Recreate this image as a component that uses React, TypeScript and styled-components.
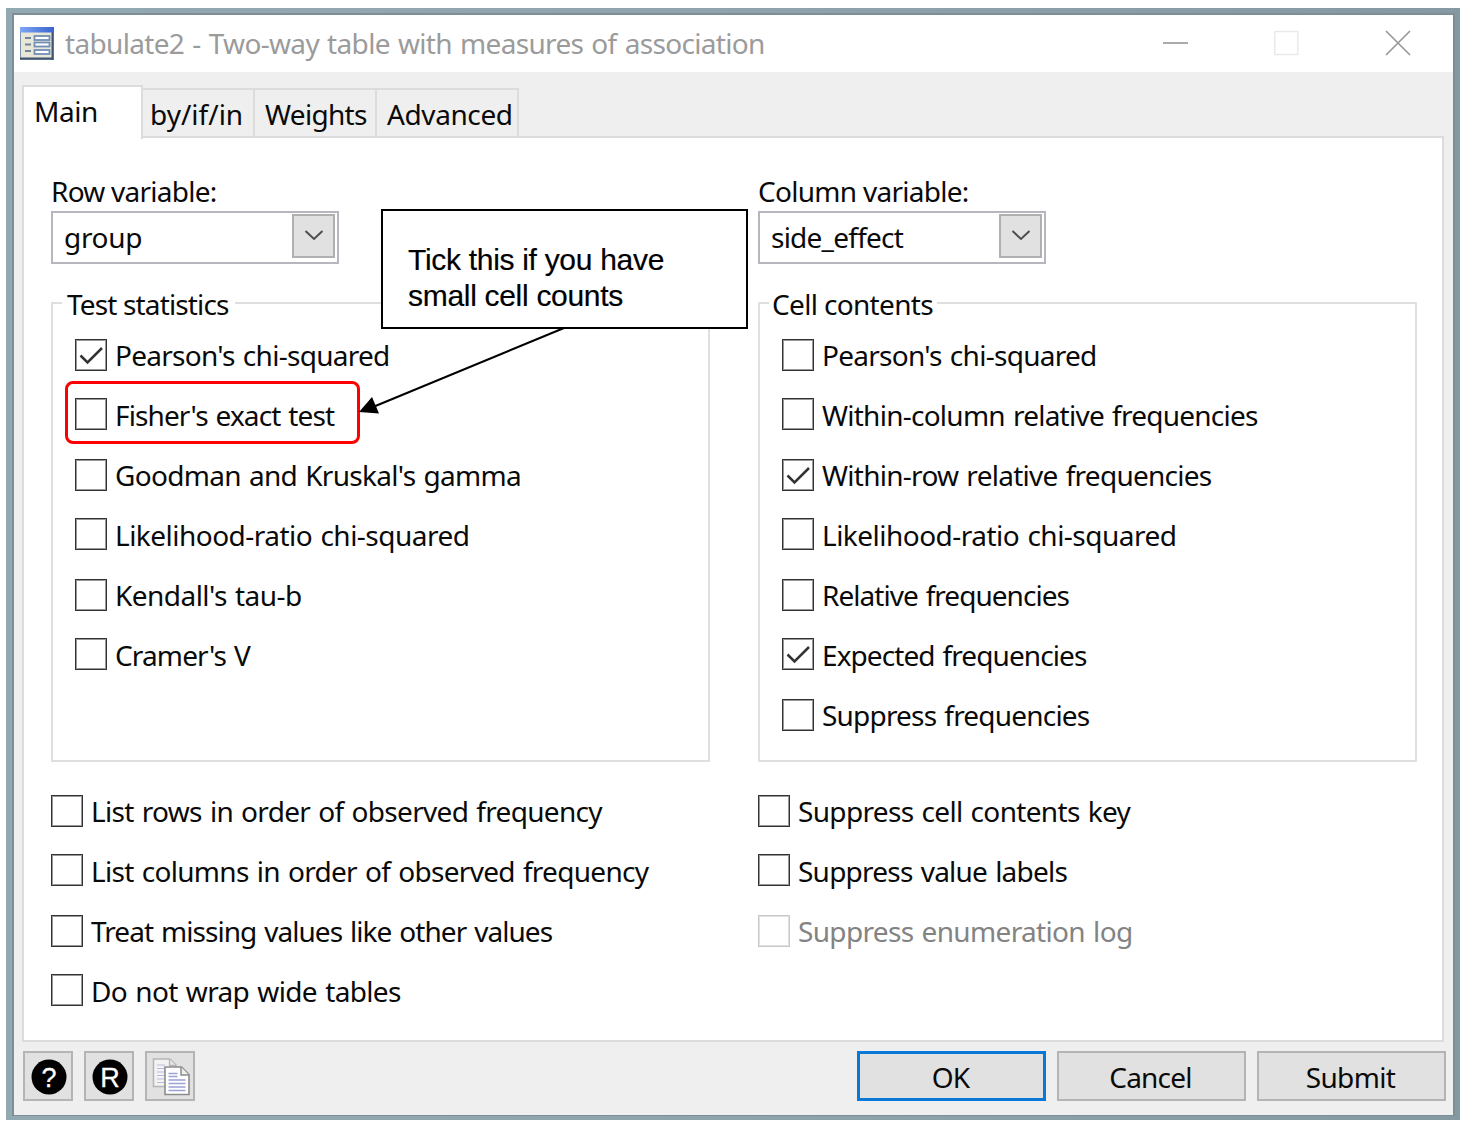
import React from "react";
import styled, { createGlobalStyle, css } from "styled-components";

const GlobalStyle = createGlobalStyle`
  *, *::after { box-sizing: border-box; }
  body { margin: 0; background: #fff; }
`;

const Page = styled.div`
  width: 1470px;
  height: 1130px;
  padding: 8px 0 0 6px;
  overflow: hidden;
  font-family: "Noto Sans", "Open Sans", sans-serif;
  font-size: 28px;
  line-height: 38px;
  color: #0a0a0a;
  white-space: nowrap;
`;

const Desktop = styled.div`
  width: 1454px;
  height: 1112px;
  padding: 5px 5px 4px 6px;
  background: linear-gradient(90deg, #93a9b2, #8fa3ac 50%, #8599a3);
`;

const Window = styled.div`
  display: flex;
  flex-direction: column;
  height: 1103px;
  border: 2px solid #7d8e95;
  border-bottom-width: 1px;
  background: #efefef;
`;

const TitleBar = styled.header`
  display: flex;
  align-items: center;
  height: 57px;
  padding: 0 42px 0 6px;
  background: #fff;
  color: #9b9b9b;
`;

const Text = styled.span<{ $ls?: number }>`
  letter-spacing: ${(p) => p.$ls ?? 0}px;
`;

const TitleText = styled(Text)`
  margin: 0 0 1px 11px;
  word-spacing: 1.5px;
`;

const Controls = styled.div`
  display: flex;
  align-items: center;
  gap: 85px;
  margin: 0 0 2px auto;
`;

const TabStrip = styled.nav`
  display: flex;
  align-items: flex-end;
  height: 65px;
  padding-left: 8px;
`;

const Tab = styled.div<{ $w: number; $pad?: number; $active?: boolean }>`
  width: ${(p) => p.$w}px;
  height: 49px;
  padding: 5px 0 0 ${(p) => p.$pad ?? 9}px;
  border: 2px solid #dcdcdc;
  border-left: 0;
  border-bottom: 0;
  ${(p) =>
    p.$active &&
    css`
      position: relative;
      z-index: 1;
      height: 54px;
      margin-bottom: -2px;
      border-left: 2px solid #dcdcdc;
      background: #fff;
    `}
`;

const Panel = styled.main`
  position: relative;
  display: grid;
  grid-template-columns: 659px 659px;
  column-gap: 48px;
  width: 1422px;
  height: 906px;
  margin-left: 8px;
  margin-top: -1px;
  padding: 34px 0 0 27px;
  border: 2px solid #dcdcdc;
  background: #fff;
`;

const Column = styled.section`
  display: flex;
  flex-direction: column;
`;

const FieldLabel = styled.label`
  height: 39px;
`;

const Combo = styled.div`
  display: flex;
  justify-content: space-between;
  width: 288px;
  height: 53px;
  padding: 1px 2px 0 11px;
  border: 2px solid #b7b5bd;
`;

const ComboValue = styled.span<{ $ls: number }>`
  padding-top: 4px;
  letter-spacing: ${(p) => p.$ls}px;
`;

const ComboButton = styled.span`
  display: flex;
  align-items: center;
  justify-content: center;
  width: 43px;
  height: 44px;
  border: 2px solid #b0b0b0;
  background: #e1e1e1;
`;

const Group = styled.div`
  height: 460px;
  margin-top: 38px;
  padding-left: 22px;
  border: 2px solid #dfdfdf;
`;

const Legend = styled.div<{ $w: number; $pad: number; $ls: number }>`
  width: ${(p) => p.$w}px;
  margin: -19px 0 16px -13px;
  padding-left: ${(p) => p.$pad}px;
  background: #fff;
  letter-spacing: ${(p) => p.$ls}px;
`;

const CheckText = styled(Text)`
  word-spacing: 1.5px;
`;

const CheckRow = styled.label<{ $disabled?: boolean; $marked?: boolean }>`
  position: relative;
  display: flex;
  align-items: center;
  gap: 8px;
  height: 32px;
  color: ${(p) => (p.$disabled ? "#838383" : "inherit")};
  &:nth-child(even) ${CheckText} {
    padding-top: 2px;
  }
  ${(p) =>
    p.$marked &&
    css`
      &::after {
        content: "";
        position: absolute;
        left: -10px;
        top: -17px;
        width: 295px;
        height: 63px;
        border: 3px solid #fe0000;
        border-radius: 8px;
      }
    `}
`;

const Checks = styled.div<{ $top?: number }>`
  display: grid;
  grid-auto-rows: 59px 61px;
  align-items: start;
  margin-top: ${(p) => p.$top ?? 0}px;
`;

const Box = styled.span<{ $disabled?: boolean }>`
  display: flex;
  width: 32px;
  height: 32px;
  border: 1px solid ${(p) => (p.$disabled ? "#c8c8c8" : "#333")};
  box-shadow: inset 0 0 0 1px ${(p) => (p.$disabled ? "#e2e2e2" : "#999")};
  background: #fff;
`;

const Callout = styled.aside`
  position: absolute;
  left: 357px;
  top: 71px;
  width: 367px;
  height: 120px;
  padding: 31px 0 0 25px;
  border: 2px solid #000;
  background: #fff;
  color: #000;
  font: 30px/36px "Liberation Sans", Arial, sans-serif;
  letter-spacing: -0.3px;
  -webkit-text-stroke: 0.2px #000;
`;

const Arrow = styled.svg`
  position: absolute;
  left: 331px;
  top: 182px;
`;

const Footer = styled.footer`
  display: flex;
  gap: 12px;
  padding: 9px 7px 0 9px;
`;

const IconButton = styled.button`
  display: flex;
  align-items: center;
  justify-content: center;
  width: 50px;
  height: 50px;
  margin-right: -1px;
  padding: 1px 0 0 1px;
  border: 2px solid #b4b4b4;
  background: #e1e1e1;
`;

const PushButton = styled.button<{ $primary?: boolean; $ls: number }>`
  width: 189px;
  height: 50px;
  padding: 1px 2px 0 0;
  border: ${(p) => (p.$primary ? "3px solid #0a78d7" : "2px solid #b4b4b4")};
  background: #e1e1e1;
  color: inherit;
  font: inherit;
  letter-spacing: ${(p) => p.$ls}px;
`;

const PushButtons = styled.div`
  display: flex;
  gap: 11px;
  margin-left: auto;
`;

const FormIcon = () => (
  <svg width="34" height="33" viewBox="0 0 34 33">
    <defs>
      <linearGradient id="bar" x1="0" x2="1" y1="0" y2="0">
        <stop offset="0" stopColor="#7ea6f4" />
        <stop offset="1" stopColor="#3a63d0" />
      </linearGradient>
    </defs>
    <rect x="0.5" y="0.5" width="33" height="32" fill="#e9e7d8" stroke="#7d92ad" />
    <path d="M0 31.5H33M32.5 4V33" stroke="#41546e" strokeWidth="2" />
    <rect width="34" height="5.5" fill="url(#bar)" />
    <path d="M5 11h6M5 17.5h6M5 24h6" stroke="#74869b" strokeWidth="1.8" />
    <g fill="#fff" stroke="#6f8fb5" strokeWidth="1.8">
      <rect x="14.5" y="9" width="15" height="4" />
      <rect x="14.5" y="15.5" width="15" height="4" />
      <rect x="14.5" y="23" width="15" height="4" />
    </g>
  </svg>
);

const Glyph = ({ char }: { char: string }) => (
  <svg width="36" height="36" viewBox="0 0 36 36">
    <circle cx="18" cy="18" r="17.5" fill="#000" />
    <text x="18" y="27.5" textAnchor="middle" fill="#fff" stroke="#fff" strokeWidth="0.3" fontFamily="Liberation Sans, Arial, sans-serif" fontSize="27">
      {char}
    </text>
  </svg>
);

const CopyIcon = () => (
  <svg width="38" height="38" viewBox="0 0 38 38">
    <path d="M1.5 1H18L24 7V28.5H1.5Z" fill="#f3f3f3" stroke="#b5b5b5" strokeWidth="1.5" />
    <path d="M17.5 1V7.5H24" fill="#e6e6e6" stroke="#b5b5b5" strokeWidth="1.3" />
    <path d="M5 7h8M5 10.5h8M5 14h8M5 17.5h8M5 21h8M5 24.5h8" stroke="#b9bee0" strokeWidth="1.2" />
    <path d="M13 9H29.5L37 16.5V36.5H13Z" fill="#fff" stroke="#8c8c8c" strokeWidth="1.6" />
    <path d="M29 9V17H37" fill="#eee" stroke="#8c8c8c" strokeWidth="1.5" />
    <path d="M16.5 15.5h9M16.5 18.5h9M16.5 22h17M16.5 25.5h17M16.5 29h17M16.5 32.5h17" stroke="#9ba3d3" strokeWidth="1.3" />
  </svg>
);

const Tick = () => (
  <svg width="30" height="30" viewBox="0 0 30 30">
    <path d="M4.5 15.5L11.5 22.5L26 8" fill="none" stroke="#333" strokeWidth="2.5" />
  </svg>
);

const Chevron = () => (
  <svg width="20" height="12" viewBox="0 0 20 12">
    <path d="M1.5 1L10 9L18.5 1" fill="none" stroke="#4d4d4d" strokeWidth="2" />
  </svg>
);

const ComboBox = ({ value, ls }: { value: string; ls: number }) => (
  <Combo>
    <ComboValue $ls={ls}>{value}</ComboValue>
    <ComboButton>
      <Chevron />
    </ComboButton>
  </Combo>
);

interface Option {
  label: string;
  ls: number;
  on?: boolean;
  disabled?: boolean;
  marked?: boolean;
}

const tests: Option[] = [
  { label: "Pearson's chi-squared", ls: -0.72, on: true },
  { label: "Fisher's exact test", ls: -0.89, marked: true },
  { label: "Goodman and Kruskal's gamma", ls: -0.69 },
  { label: "Likelihood-ratio chi-squared", ls: -0.52 },
  { label: "Kendall's tau-b", ls: -0.54 },
  { label: "Cramer's V", ls: -0.86 },
];

const contents: Option[] = [
  { label: "Pearson's chi-squared", ls: -0.72 },
  { label: "Within-column relative frequencies", ls: -0.75 },
  { label: "Within-row relative frequencies", ls: -0.73, on: true },
  { label: "Likelihood-ratio chi-squared", ls: -0.52 },
  { label: "Relative frequencies", ls: -0.96 },
  { label: "Expected frequencies", ls: -0.91, on: true },
  { label: "Suppress frequencies", ls: -0.8 },
];

const listing: Option[] = [
  { label: "List rows in order of observed frequency", ls: -0.69 },
  { label: "List columns in order of observed frequency", ls: -0.7 },
  { label: "Treat missing values like other values", ls: -0.94 },
  { label: "Do not wrap wide tables", ls: -0.64 },
];

const suppress: Option[] = [
  { label: "Suppress cell contents key", ls: -0.67 },
  { label: "Suppress value labels", ls: -0.76 },
  { label: "Suppress enumeration log", ls: -0.66, disabled: true },
];

const CheckList = ({ options, top }: { options: Option[]; top?: number }) => (
  <Checks $top={top}>
    {options.map((o) => (
      <CheckRow key={o.label} $disabled={o.disabled} $marked={o.marked}>
        <Box $disabled={o.disabled}>{o.on && <Tick />}</Box>
        <CheckText $ls={o.ls}>{o.label}</CheckText>
      </CheckRow>
    ))}
  </Checks>
);

export default function App() {
  return (
    <Page>
      <GlobalStyle />
      <Desktop>
        <Window>
          <TitleBar>
            <FormIcon />
            <TitleText $ls={-0.67}>tabulate2 - Two-way table with measures of association</TitleText>
            <Controls>
              <svg width="26" height="26" viewBox="0 0 26 26">
                <path d="M0 13H25" stroke="#9b9b9b" strokeWidth="1.7" />
              </svg>
              <svg width="26" height="26" viewBox="0 0 26 26">
                <rect x="0.8" y="1.5" width="23" height="23" fill="none" stroke="#eaeaea" strokeWidth="1.5" />
              </svg>
              <svg width="26" height="26" viewBox="0 0 26 26">
                <path d="M1 1L25 25M25 1L1 25" stroke="#999" strokeWidth="1.7" />
              </svg>
            </Controls>
          </TitleBar>
          <TabStrip>
            <Tab $w={121} $pad={10} $active>
              <Text $ls={-0.44}>Main</Text>
            </Tab>
            <Tab $w={112} $pad={7}>
              <Text $ls={0}>by/if/in</Text>
            </Tab>
            <Tab $w={122} $pad={10}>
              <Text $ls={-0.69}>Weights</Text>
            </Tab>
            <Tab $w={142} $pad={10}>
              <Text $ls={-0.4}>Advanced</Text>
            </Tab>
          </TabStrip>
          <Panel>
            <Column>
              <FieldLabel>
                <Text $ls={-0.75}>Row variable:</Text>
              </FieldLabel>
              <ComboBox value="group" ls={-0.3} />
              <Group>
                <Legend $w={173} $pad={5} $ls={-0.85}>Test statistics</Legend>
                <CheckList options={tests} />
              </Group>
              <CheckList options={listing} top={33} />
            </Column>
            <Column>
              <FieldLabel>
                <Text $ls={-0.72}>Column variable:</Text>
              </FieldLabel>
              <ComboBox value="side_effect" ls={-0.76} />
              <Group>
                <Legend $w={168} $pad={3} $ls={-0.66}>Cell contents</Legend>
                <CheckList options={contents} />
              </Group>
              <CheckList options={suppress} top={33} />
            </Column>
            <Arrow width="216" height="100" viewBox="0 0 216 100">
              <path d="M209 8L18 87" stroke="#000" strokeWidth="2" />
              <path d="M4 92L17 77L24 93.5Z" fill="#000" />
            </Arrow>
            <Callout>
              Tick this if you have
              <br />
              small cell counts
            </Callout>
          </Panel>
          <Footer>
            <IconButton>
              <Glyph char="?" />
            </IconButton>
            <IconButton>
              <Glyph char="R" />
            </IconButton>
            <IconButton>
              <CopyIcon />
            </IconButton>
            <PushButtons>
              <PushButton $primary $ls={-0.87}>OK</PushButton>
              <PushButton $ls={-0.79}>Cancel</PushButton>
              <PushButton $ls={-0.66}>Submit</PushButton>
            </PushButtons>
          </Footer>
        </Window>
      </Desktop>
    </Page>
  );
}
